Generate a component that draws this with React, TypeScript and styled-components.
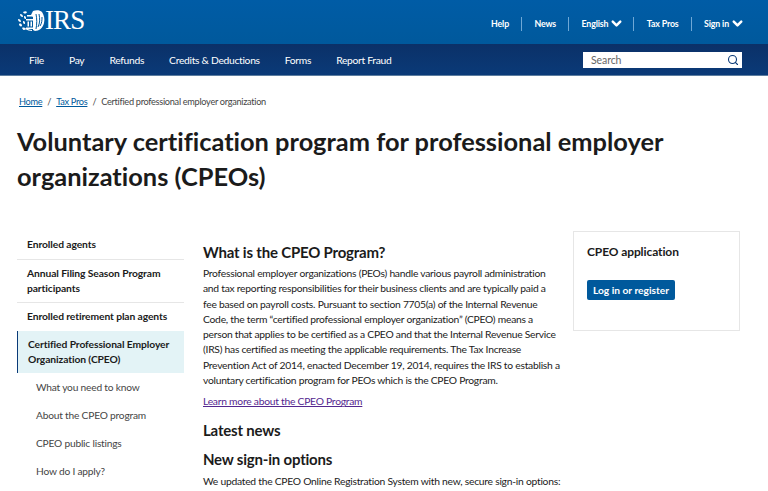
import React from 'react';
import styled, { createGlobalStyle } from 'styled-components';
import { ChevronDown, Search } from 'lucide-react';

const GlobalStyle = createGlobalStyle`
    html, body {
        margin: 0;
        padding: 0;
        background: #fff;
        overflow: hidden;
    }
    body {
        font-family: 'Lato', 'Noto Sans', sans-serif;
        font-variant-ligatures: none;
        color: #1b1b1b;
    }
`;

const Page = styled.div`
    width: 768px;
    height: 491px;
    overflow: hidden;
`;

const TopBar = styled.div`
    height: 44px;
    background: linear-gradient(180deg, #005ca6 0%, #00599c 100%);
    display: flex;
    align-items: center;
    justify-content: space-between;
    padding: 0 26px 0 18px;
    box-sizing: border-box;
`;

const Logo = styled.div`
    display: flex;
    align-items: center;
    color: #fff;
    margin-top: -3px;
`;

const LogoText = styled.span`
    font-family: 'Liberation Serif', serif;
    font-size: 27px;
    line-height: 27px;
    letter-spacing: -0.9px;
`;

const TopLinks = styled.div`
    display: flex;
    align-items: center;
    margin-top: 3px;
`;

const TopLink = styled.a<{ $last?: boolean }>`
    display: flex;
    align-items: center;
    gap: 1px;
    height: 14px;
    color: #fff;
    font-size: 8.8px;
    letter-spacing: -0.15px;
    font-weight: 700;
    padding-right: ${({ $last }) => ($last ? 0 : '12px')};
    margin-right: ${({ $last }) => ($last ? 0 : '12.5px')};
    border-right: ${({ $last }) => ($last ? 'none' : '1px solid #6fa8d6')};
`;

const Chevron = styled(ChevronDown)`
    margin: 0 -3px 0 0;
`;

const NavBar = styled.div`
    height: 32px;
    background: linear-gradient(180deg, #0b3168 0%, #0a3a78 100%);
    border-bottom: 1px solid #5c7d9f;
    box-sizing: border-box;
    display: flex;
    align-items: center;
    justify-content: space-between;
    padding: 0 26px 0 29px;
`;

const NavLinks = styled.div`
    display: flex;
    gap: 25px;
`;

const NavLink = styled.a`
    color: #fff;
    font-size: 10.3px;
    letter-spacing: -0.3px;
    font-weight: 400;
`;

const SearchBox = styled.div`
    width: 159px;
    height: 16px;
    background: #fff;
    display: flex;
    align-items: center;
    justify-content: space-between;
    padding: 0 3px 0 8px;
    box-sizing: border-box;
    font-size: 10.5px;
    letter-spacing: -0.1px;
    color: #666;
`;

const Breadcrumbs = styled.div`
    display: flex;
    align-items: center;
    font-size: 9.2px;
    letter-spacing: -0.3px;
    color: #454545;
    padding: 19px 0 0 19px;
    height: 13px;
`;

const Crumb = styled.a`
    color: #00599c;
    text-decoration: underline;
`;

const Slash = styled.span`
    margin: 0 5px;
`;

const Title = styled.h1`
    margin: 16px 0 0 17px;
    font-size: 25.4px;
    line-height: 35px;
    font-weight: 700;
    color: #1b1b1b;
`;

const Columns = styled.div`
    display: grid;
    grid-template-columns: 167px 351px 167px;
    column-gap: 19px;
    margin: 37px 0 0 17px;
`;

const SideNav = styled.nav`
    display: flex;
    flex-direction: column;
`;

const SideItem = styled.div<{ $active?: boolean; $divider?: boolean }>`
    font-size: 10.3px;
    letter-spacing: -0.1px;
    line-height: 15px;
    font-weight: 700;
    padding: 6px 8px 6.5px 10px;
    border-bottom: ${({ $divider }) => ($divider ? '1px solid #e6e6e6' : 'none')};
    background: ${({ $active }) => ($active ? '#e3f3f6' : 'transparent')};
    border-left: ${({ $active }) => ($active ? '1px solid #0a3a78' : 'none')};
`;

const SubItem = styled.a`
    display: block;
    font-size: 10.2px;
    letter-spacing: -0.2px;
    line-height: 16px;
    color: #454545;
    padding: 6px 0 6px 19px;
`;

const Main = styled.main`
    display: flex;
    flex-direction: column;
`;

const Heading = styled.h2<{ $gap?: number }>`
    margin: ${({ $gap }) => `${$gap ?? 0}px 0 0`};
    font-size: 15px;
    letter-spacing: -0.2px;
    line-height: 22px;
    font-weight: 700;
`;

const Body = styled.p<{ $gap?: number }>`
    margin: ${({ $gap }) => `${$gap ?? 0}px 0 0`};
    font-size: 10.3px;
    letter-spacing: -0.25px;
    line-height: 15.3px;
    white-space: nowrap;
    color: #1b1b1b;
`;

const MoreLink = styled.a`
    color: #54278f;
    text-decoration: underline;
`;

const Card = styled.aside`
    height: 100px;
    border: 1px solid #e6e6e6;
    box-sizing: border-box;
    padding: 11px 13px;
`;

const CardTitle = styled.div`
    font-size: 12px;
    letter-spacing: -0.1px;
    line-height: 18px;
    font-weight: 700;
`;

const CardButton = styled.a`
    display: inline-block;
    margin-top: 19px;
    background: #00599c;
    color: #fff;
    font-size: 10.2px;
    font-weight: 700;
    line-height: 20px;
    padding: 0 6px;
    border-radius: 2px;
`;

const IrsEagle: React.FC = () => (
    <svg width="27" height="22" viewBox="0 0 27 22" fill="#fff">
        {/* laurel */}
        <path d="M5 2c2-1 3-1 4 0-1 2-3 2-4 0zM2 4c2 0 3 1 3 3-2 0-3-1-3-3zM0 9c2 0 3 1 3 3-2 0-3-1-3-3zM1 14c2-1 3 0 3 2-1 1-3 0-3-2zM4 18c2-1 3 0 4 1-2 2-3 1-4-1zM6 6c2 0 2 1 2 3-2 0-2-1-2-3zM5 11c2 0 2 1 2 3-2 0-2-1-2-3z" />
        <path d="M8 18c2 1 4 2 6 2v1c-2 0-5-1-7-2z" />
        {/* wing */}
        <path d="M15 1c3-1 7-1 9 1 2 3 3 7 2 11-1 5-5 8-9 8l-2-1V7l-2-2z" />
        <path d="M18 4c1 5 1 10 0 15M21 4c1 5 1 9-1 13M24 7c0 3 0 6-2 9" stroke="#00599c" strokeWidth="1" fill="none" />
        {/* shield */}
        <path d="M9 5h6v1.5H9zM8 9h7v1.5H8zM9.5 11.5H11v5H9.5zM12.5 11.5H14v5h-1.5zM8 17.5h7V19H8z" />
    </svg>
);

const App: React.FC = () => (
    <Page>
        <GlobalStyle />
        <TopBar>
            <Logo>
                <IrsEagle />
                <LogoText>IRS</LogoText>
            </Logo>
            <TopLinks>
                <TopLink>Help</TopLink>
                <TopLink>News</TopLink>
                <TopLink>
                    English <Chevron size={15} strokeWidth={4} />
                </TopLink>
                <TopLink>Tax Pros</TopLink>
                <TopLink $last>
                    Sign in <Chevron size={15} strokeWidth={4} />
                </TopLink>
            </TopLinks>
        </TopBar>
        <NavBar>
            <NavLinks>
                <NavLink>File</NavLink>
                <NavLink>Pay</NavLink>
                <NavLink>Refunds</NavLink>
                <NavLink>Credits &amp; Deductions</NavLink>
                <NavLink>Forms</NavLink>
                <NavLink>Report Fraud</NavLink>
            </NavLinks>
            <SearchBox>
                Search
                <Search size={12} strokeWidth={2.2} color="#0a3a78" />
            </SearchBox>
        </NavBar>
        <Breadcrumbs>
            <Crumb>Home</Crumb>
            <Slash>/</Slash>
            <Crumb>Tax Pros</Crumb>
            <Slash>/</Slash>
            Certified professional employer organization
        </Breadcrumbs>
        <Title>
            Voluntary certification program for professional employer
            <br />
            organizations (CPEOs)
        </Title>
        <Columns>
            <SideNav>
                <SideItem $divider>Enrolled agents</SideItem>
                <SideItem $divider>
                    Annual Filing Season Program
                    <br />
                    participants
                </SideItem>
                <SideItem>Enrolled retirement plan agents</SideItem>
                <SideItem $active>
                    Certified Professional Employer
                    <br />
                    Organization (CPEO)
                </SideItem>
                <SubItem>What you need to know</SubItem>
                <SubItem>About the CPEO program</SubItem>
                <SubItem>CPEO public listings</SubItem>
                <SubItem>How do I apply?</SubItem>
            </SideNav>
            <Main>
                <Heading $gap={10}>What is the CPEO Program?</Heading>
                <Body $gap={3}>
                    Professional employer organizations (PEOs) handle various payroll administration
                    <br />
                    and tax reporting responsibilities for their business clients and are typically paid a
                    <br />
                    fee based on payroll costs. Pursuant to section 7705(a) of the Internal Revenue
                    <br />
                    Code, the term “certified professional employer organization” (CPEO) means a
                    <br />
                    person that applies to be certified as a CPEO and that the Internal Revenue Service
                    <br />
                    (IRS) has certified as meeting the applicable requirements. The Tax Increase
                    <br />
                    Prevention Act of 2014, enacted December 19, 2014, requires the IRS to establish a
                    <br />
                    voluntary certification program for PEOs which is the CPEO Program.
                </Body>
                <Body $gap={6}>
                    <MoreLink>Learn more about the CPEO Program</MoreLink>
                </Body>
                <Heading $gap={9}>Latest news</Heading>
                <Heading $gap={7}>New sign-in options</Heading>
                <Body $gap={4}>We updated the CPEO Online Registration System with new, secure sign-in options:</Body>
            </Main>
            <Card>
                <CardTitle>CPEO application</CardTitle>
                <CardButton>Log in or register</CardButton>
            </Card>
        </Columns>
    </Page>
);

export default App;
